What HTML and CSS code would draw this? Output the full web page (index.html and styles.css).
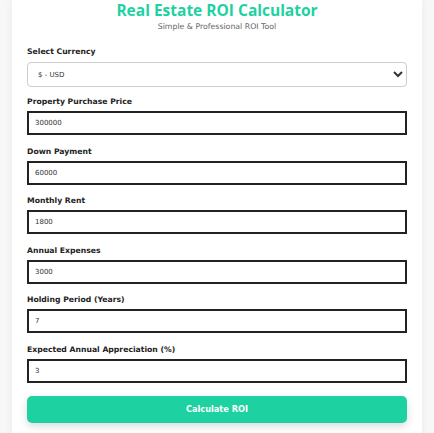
FILE: index.html
```html
<!DOCTYPE html>
<html lang="en">

<head>
    <meta charset="UTF-8">
    <meta name="viewport" content="width=device-width, initial-scale=1.0">
    <title>Real Estate ROI Calculator</title>
    <link rel="stylesheet" href="styles.css">
</head>

<body>
    <div class="calculator">
        <h1 class="title">Real Estate ROI Calculator</h1>
        <p class="subtitle">Simple &amp; Professional ROI Tool</p>

        <div class="form-group currency">
            <label for="currency">Select Currency</label>
            <select id="currency">
                <option value="USD">$ - USD</option>
                <option value="EUR">€ - EUR</option>
                <option value="GBP">£ - GBP</option>
            </select>
        </div>

        <div class="form-group">
            <label for="price">Property Purchase Price</label>
            <input type="number" id="price" value="300000">
        </div>
        <div class="form-group">
            <label for="down">Down Payment</label>
            <input type="number" id="down" value="60000">
        </div>
        <div class="form-group">
            <label for="rent">Monthly Rent</label>
            <input type="number" id="rent" value="1800">
        </div>
        <div class="form-group">
            <label for="expenses">Annual Expenses</label>
            <input type="number" id="expenses" value="3000">
        </div>
        <div class="form-group">
            <label for="years">Holding Period (Years)</label>
            <input type="number" id="years" value="7">
        </div>
        <div class="form-group">
            <label for="appreciation">Expected Annual Appreciation (%)</label>
            <input type="number" id="appreciation" value="3">
        </div>

        <button class="btn-calc">Calculate ROI</button>
    </div>
</body>

</html>
```

FILE: styles.css
```css
* {
    box-sizing: border-box;
}

body {
    margin: 0;
    background: #f7f7f8;
    font-family: "DejaVu Sans", "Noto Sans", sans-serif;
    color: #222;
}

.calculator {
    width: 410px;
    margin: 0 12px;
    padding: 1px 15px 11px;
    background: #fff;
    box-shadow: 0 0 8px rgba(0, 0, 0, .06);
}

.title {
    margin: 0;
    font-family: "Open Sans", sans-serif;
    font-size: 15.5px;
    line-height: 18px;
    font-weight: 700;
    text-align: center;
    color: #1dd1a1;
}

.subtitle {
    margin: 3px 0 0;
    font-size: 7.8px;
    line-height: 10px;
    text-align: center;
    color: #666;
}

.form-group {
    margin-bottom: 10.5px;
}

.form-group.currency {
    margin-top: 14px;
    margin-bottom: 9px;
}

.form-group label {
    display: block;
    font-size: 7.7px;
    line-height: 12px;
    font-weight: 700;
    margin-bottom: 3px;
}

.form-group.currency label {
    margin-bottom: 4px;
}

.form-group input {
    display: block;
    width: 100%;
    height: 24px;
    padding: 0 6px;
    border: 2px solid #222;
    font-family: inherit;
    font-size: 7px;
    color: #333;
    outline: none;
}

.form-group select {
    display: block;
    width: 100%;
    height: 25px;
    padding: 0 6px;
    border: 1px solid #ccc;
    border-radius: 4px;
    background: #fff;
    font-family: inherit;
    font-size: 7px;
    color: #333;
}

.btn-calc {
    display: block;
    width: 100%;
    height: 27px;
    margin-top: 13px;
    border: none;
    border-radius: 5px;
    background: #1dd1a1;
    color: #fff;
    font-family: inherit;
    font-size: 8.2px;
    font-weight: 700;
    box-shadow: 0 3px 8px rgba(0, 0, 0, .15);
    cursor: pointer;
}
```
